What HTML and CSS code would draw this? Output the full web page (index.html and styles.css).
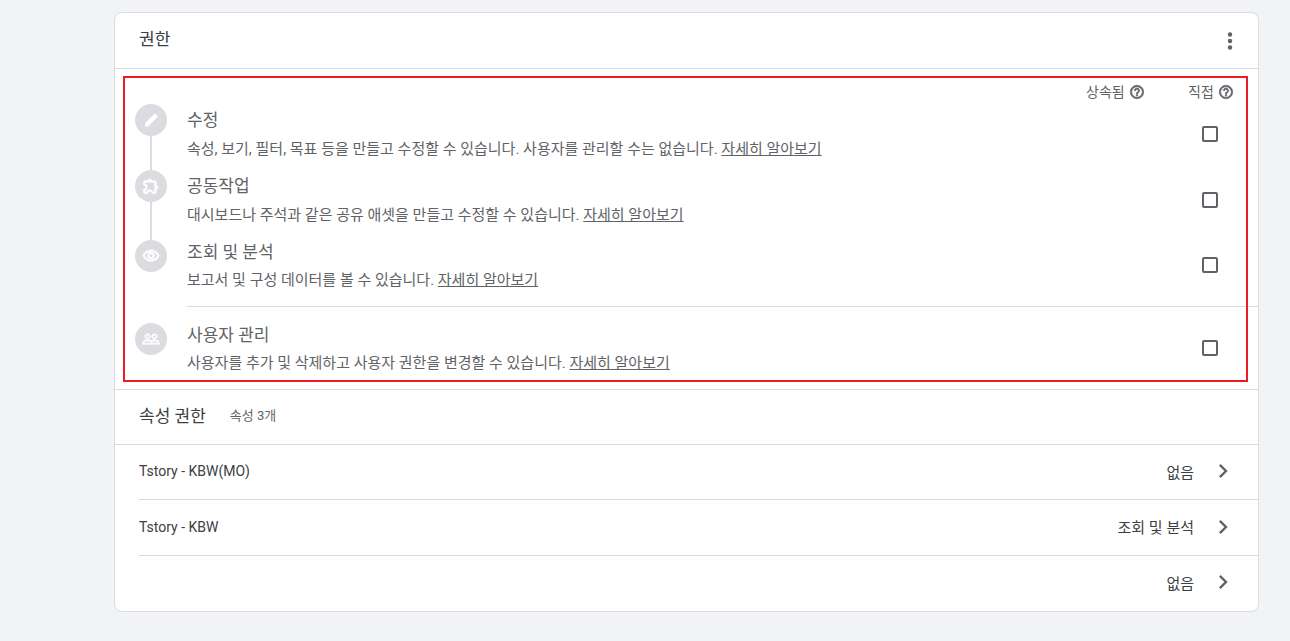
FILE: index.html
```html
<!DOCTYPE html>
<html lang="ko">
<head>
<meta charset="utf-8">
<title>권한</title>
<link rel="stylesheet" href="styles.css">
</head>
<body>
<main class="card">
  <header class="card-head">
    <h1 class="card-title">권한</h1>
    <svg class="more" width="24" height="24" viewBox="0 0 24 24"><circle cx="12" cy="5.5" r="2.2"/><circle cx="12" cy="12" r="2.2"/><circle cx="12" cy="18.5" r="2.2"/></svg>
  </header>
  <section class="perms">
    <div class="outline"></div>
    <div class="cols">
      <span class="col col-inherit">상속됨
        <svg class="help" viewBox="0 0 24 24"><path d="M11 18h2v-2h-2v2zm1-16C6.48 2 2 6.48 2 12s4.48 10 10 10 10-4.48 10-10S17.52 2 12 2zm0 18c-4.41 0-8-3.59-8-8s3.59-8 8-8 8 3.59 8 8-3.59 8-8 8zm0-14c-2.21 0-4 1.79-4 4h2c0-1.1.9-2 2-2s2 .9 2 2c0 2-3 1.75-3 5h2c0-2.25 3-2.5 3-5 0-2.21-1.79-4-4-4z"/></svg></span>
      <span class="col col-direct">직접
        <svg class="help" viewBox="0 0 24 24"><path d="M11 18h2v-2h-2v2zm1-16C6.48 2 2 6.48 2 12s4.48 10 10 10 10-4.48 10-10S17.52 2 12 2zm0 18c-4.41 0-8-3.59-8-8s3.59-8 8-8 8 3.59 8 8-3.59 8-8 8zm0-14c-2.21 0-4 1.79-4 4h2c0-1.1.9-2 2-2s2 .9 2 2c0 2-3 1.75-3 5h2c0-2.25 3-2.5 3-5 0-2.21-1.79-4-4-4z"/></svg></span>
    </div>

    <div class="perm perm-edit">
      <div class="badge linked">
        <svg viewBox="0 0 24 24"><path d="M4 20.500v-4.300L15.700 4.500c.8-.8 2-.8 2.800 0l1.500 1.500c.8.8.8 2 0 2.800L8.300 20.500z"/></svg>
      </div>
      <div class="perm-text">
        <div class="perm-name">수정</div>
        <div class="perm-desc">속성, 보기, 필터, 목표 등을 만들고 수정할 수 있습니다. 사용자를 관리할 수는 없습니다. <a>자세히 알아보기</a></div>
      </div>
      <span class="check"></span>
    </div>

    <div class="perm perm-collab">
      <div class="badge linked linked-long">
        <svg class="bold" viewBox="0 0 24 24"><path d="M10.500 4.500c.28 0 .5.22.5.5v2h6v6h2c.28 0 .5.22.5.5s-.22.5-.5.5h-2v6h-2.120c-.68-1.750-2.390-3-4.380-3s-3.700 1.250-4.380 3H4v-2.120c1.750-.68 3-2.390 3-4.380 0-1.990-1.240-3.700-2.990-4.380L4 7h6V5c0-.28.22-.5.5-.5m0-2C9.120 2.500 8 3.620 8 5H4c-1.100 0-1.990.9-1.990 2v3.800h.29c1.490 0 2.700 1.210 2.700 2.700s-1.210 2.700-2.700 2.700H2V20c0 1.100.9 2 2 2h3.800v-.3c0-1.490 1.210-2.700 2.700-2.700s2.700 1.210 2.700 2.700v.3H17c1.100 0 2-.9 2-2v-4c1.380 0 2.500-1.120 2.500-2.500S20.380 11 19 11V7c0-1.100-.9-2-2-2h-4c0-1.380-1.120-2.500-2.500-2.500z"/></svg>
      </div>
      <div class="perm-text">
        <div class="perm-name">공동작업</div>
        <div class="perm-desc">대시보드나 주석과 같은 공유 애셋을 만들고 수정할 수 있습니다. <a>자세히 알아보기</a></div>
      </div>
      <span class="check"></span>
    </div>

    <div class="perm perm-read">
      <div class="badge">
        <svg class="bold" viewBox="0 0 24 24"><path d="M12 6c3.790 0 7.170 2.130 8.820 5.500C19.170 14.870 15.790 17 12 17s-7.170-2.130-8.820-5.500C4.830 8.130 8.210 6 12 6m0-2C7 4 2.730 7.110 1 11.500 2.730 15.890 7 19 12 19s9.270-3.110 11-7.500C21.270 7.110 17 4 12 4zm0 5c1.380 0 2.500 1.120 2.500 2.500S13.380 14 12 14s-2.500-1.120-2.500-2.500S10.620 9 12 9m0-2c-2.480 0-4.500 2.020-4.500 4.500S9.520 16 12 16s4.500-2.020 4.500-4.500S14.480 7 12 7z"/></svg>
      </div>
      <div class="perm-text">
        <div class="perm-name">조회 및 분석</div>
        <div class="perm-desc">보고서 및 구성 데이터를 볼 수 있습니다. <a>자세히 알아보기</a></div>
      </div>
      <span class="check"></span>
    </div>

    <div class="perm-divider"></div>

    <div class="perm perm-users">
      <div class="badge">
        <svg class="bold" viewBox="0 0 24 24"><path d="M16.500 13c-1.200 0-3.070.34-4.500 1-1.430-.67-3.300-1-4.500-1C5.330 13 1 14.080 1 16.250V19h22v-2.750c0-2.170-4.330-3.250-6.500-3.250zm-4 4.500h-10v-1.250c0-.54 2.560-1.750 5-1.750s5 1.210 5 1.750v1.250zm9 0H14v-1.250c0-.46-.2-.86-.52-1.220.88-.3 1.960-.53 3.020-.53 2.440 0 5 1.210 5 1.750v1.250zM7.500 12c1.930 0 3.500-1.570 3.500-3.500S9.430 5 7.500 5 4 6.570 4 8.500 5.570 12 7.500 12zm0-5.500c1.100 0 2 .9 2 2s-.9 2-2 2-2-.9-2-2 .9-2 2-2zm9 5.500c1.930 0 3.500-1.570 3.500-3.500S18.430 5 16.500 5 13 6.570 13 8.500s1.570 3.500 3.500 3.500zm0-5.500c1.100 0 2 .9 2 2s-.9 2-2 2-2-.9-2-2 .9-2 2-2z"/></svg>
      </div>
      <div class="perm-text">
        <div class="perm-name">사용자 관리</div>
        <div class="perm-desc">사용자를 추가 및 삭제하고 사용자 권한을 변경할 수 있습니다. <a>자세히 알아보기</a></div>
      </div>
      <span class="check"></span>
    </div>
  </section>

  <section class="props">
    <div class="props-head">
      <h2 class="props-title">속성 권한</h2>
      <span class="props-count">속성 3개</span>
    </div>
    <div class="prop">
      <span class="prop-name">Tstory - KBW(MO)</span>
      <span class="prop-role">없음</span>
      <svg class="chev" viewBox="0 0 24 24"><path d="M8.590 16.590 13.170 12 8.590 7.410 10 6l6 6-6 6z"/></svg>
    </div>
    <div class="prop prop-tall">
      <span class="prop-name">Tstory - KBW</span>
      <span class="prop-role">조회 및 분석</span>
      <svg class="chev" viewBox="0 0 24 24"><path d="M8.590 16.590 13.170 12 8.590 7.410 10 6l6 6-6 6z"/></svg>
    </div>
    <div class="prop prop-tall">
      <span class="prop-name"></span>
      <span class="prop-role">없음</span>
      <svg class="chev" viewBox="0 0 24 24"><path d="M8.590 16.590 13.170 12 8.590 7.410 10 6l6 6-6 6z"/></svg>
    </div>
  </section>
</main>
</body>
</html>
```
FILE: styles.css
```css
* { box-sizing: border-box; }
html, body { margin: 0; height: 100%; }
body {
  background: #f1f3f4;
  padding: 12px 31px 0 114px;
  font-family: Roboto, "Noto Sans CJK KR", sans-serif;
  color: #5f6368;
  overflow: hidden;
}
.card {
  height: 600px;
  background: #fff;
  border: 1px solid #dadce0;
  border-radius: 8px;
}
.card-head {
  height: 56px;
  display: flex;
  align-items: center;
  justify-content: space-between;
  padding: 0 16px 0 24px;
  border-bottom: 1px solid #dadce0;
}
.card-title { margin: 0 0 7px; font-size: 17px; font-weight: 400; color: #3c4043; }
.more { fill: #5f6368; }

.perms {
  position: relative;
  height: 321px;
  border-bottom: 1px solid #dadce0;
}
.outline {
  position: absolute;
  left: 8px;
  top: 7px;
  width: 1125px;
  height: 306px;
  border: 2px solid #ed1c24;
  pointer-events: none;
}
.cols {
  height: 30px;
  padding-top: 15px;
  display: flex;
  font-size: 14px;
  line-height: 16px;
}
.col { display: flex; align-items: center; gap: 4px; white-space: nowrap; }
.col-inherit { margin-left: 971px; width: 102px; }
.help { width: 16px; height: 16px; fill: #5f6368; stroke: #5f6368; stroke-width: 1; }

.perm {
  display: flex;
  align-items: flex-start;
  padding-left: 20px;
}
.perm-edit { height: 66px; }
.perm-collab { height: 66px; }
.perm-read { height: 75px; }
.perm-users { height: 60px; }
.perm-divider { height: 1px; margin-left: 72px; background: #dadce0; }

.badge {
  position: relative;
  flex: none;
  width: 32px;
  height: 32px;
  border-radius: 50%;
  background: #dadce0;
  display: flex;
  align-items: center;
  justify-content: center;
  margin-top: 5px;
}
.badge svg { width: 18px; height: 18px; fill: #fff; }
.badge .bold { stroke: #fff; stroke-width: .9; }
.linked::after {
  content: "";
  position: absolute;
  left: 15px;
  top: 32px;
  width: 2px;
  height: 34px;
  background: #dadce0;
}
.linked-long::after { height: 38px; }
.perm-read .badge { margin-top: 9px; }
.perm-users .badge { margin-top: 16px; }

.perm-text { flex: 1; margin-left: 20px; }
.perm-name { font-size: 17px; line-height: 24px; margin-top: 9px; }
.perm-desc { font-size: 15px; line-height: 20px; margin-top: 7px; }
.perm-desc a { text-decoration: underline; color: #5f6368; }
.perm-read .perm-name { margin-top: 9px; }
.perm-read .perm-desc { margin-top: 6px; }
.perm-users .perm-name { margin-top: 16px; }
.perm-users .perm-desc { margin-top: 6px; }

.check {
  flex: none;
  width: 16px;
  height: 16px;
  border: 2px solid #5f6368;
  border-radius: 2px;
  margin: 27px 40px 0 0;
}
.perm-read .check { margin-top: 26px; }
.perm-users .check { margin-top: 33px; }

.props-head {
  height: 55px;
  display: flex;
  align-items: center;
  gap: 24px;
  padding: 0 0 5px 24px;
  border-bottom: 1px solid #dadce0;
}
.props-title { margin: 0; font-size: 17px; font-weight: 400; color: #3c4043; }
.props-count { font-size: 13px; color: #5f6368; }
.prop {
  height: 55px;
  margin-left: 24px;
  display: flex;
  align-items: center;
  padding: 0 21px 2px 0;
  border-bottom: 1px solid #dadce0;
  font-size: 14px;
}
.prop-tall { height: 56px; }
.prop:last-child { border-bottom: 0; padding-bottom: 4px; }
.prop-name { flex: 1; color: #3c4043; }
.prop-role { color: #3c4043; margin-right: 15px; font-size: 15px; }
.chev { width: 28px; height: 28px; fill: #5f6368; }
```
